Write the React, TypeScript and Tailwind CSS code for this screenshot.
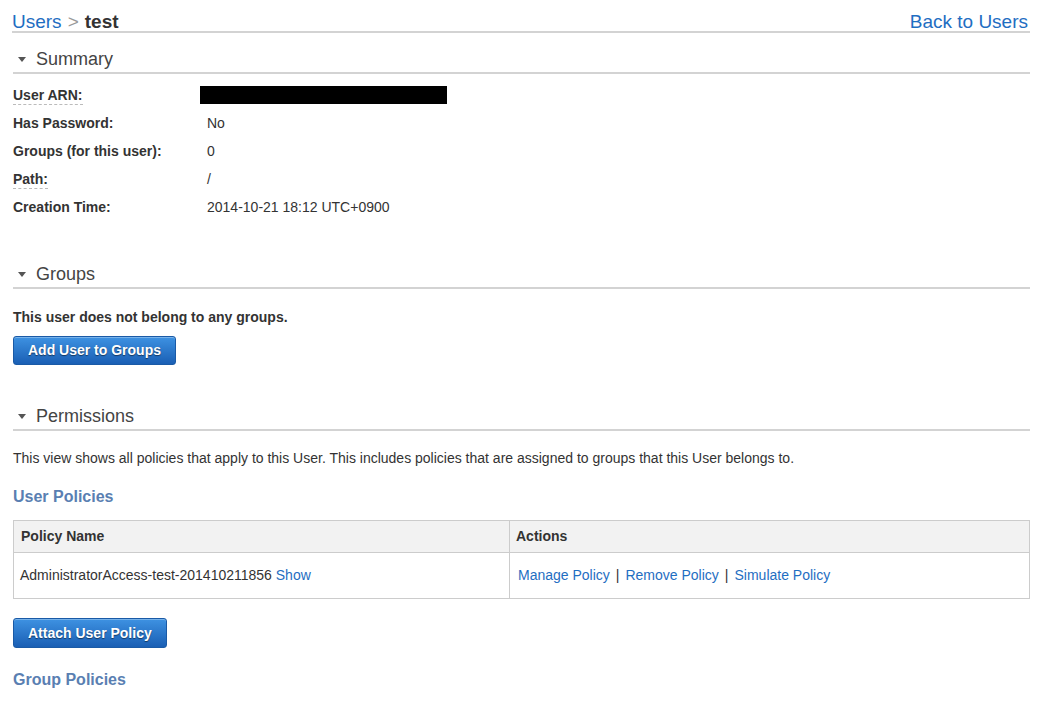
import React from "react";

const FONT = { fontFamily: '"Liberation Sans", Arial, Helvetica, sans-serif' };

const LINK = "text-[#1f6ec2] hover:underline cursor-pointer";

const BTN =
  "inline-flex items-center rounded-[3px] border border-[#1a5aa6] bg-gradient-to-b from-[#3e92e2] to-[#1a5fb4] px-[14px] text-[14px] font-bold text-white shadow-[inset_0_1px_0_rgba(255,255,255,0.3)] [text-shadow:0_1px_1px_rgba(0,0,0,0.5)]";

function SectionHeader({ title, className = "" }: { title: string; className?: string }) {
  return (
    <div
      className={`flex items-center border-b-2 border-[#d3d3d3] pb-[2px] ${className}`}
    >
      <svg width="8" height="5" viewBox="0 0 8 5" className="ml-[5px] mr-[10px]">
        <path d="M0 0h8L4 5z" fill="#555" />
      </svg>
      <span className="text-[18px] leading-[22px] text-[#444]">{title}</span>
    </div>
  );
}

const SUMMARY: { label: string; value: React.ReactNode; dashed?: boolean }[] = [
  {
    label: "User ARN:",
    value: <span className="ml-[-7px] block h-[18px] w-[247px] bg-black" />,
    dashed: true,
  },
  { label: "Has Password:", value: "No" },
  { label: "Groups (for this user):", value: "0" },
  { label: "Path:", value: "/", dashed: true },
  { label: "Creation Time:", value: "2014-10-21 18:12 UTC+0900" },
];

export default function App() {
  return (
    <div style={FONT} className="min-h-[705px] bg-white pl-[12px] pr-[8px] text-[#333]">
      {/* breadcrumb */}
      <div className="flex items-end justify-between border-b-2 border-[#d3d3d3] pt-[13px] text-[19px] leading-[18px]">
        <div>
          <span className="text-[#1f6ec2]">Users</span>
          <span className="mx-[6px] text-[#999]">&gt;</span>
          <span className="font-bold text-[#333]">test</span>
        </div>
        <span className="mr-[2px] text-[#1f6ec2]">Back to Users</span>
      </div>

      {/* Summary */}
      <SectionHeader title="Summary" className="ml-[1px] mt-[15px]" />
      <div className="ml-[1px] mt-[7px]">
        {SUMMARY.map((r) => (
          <div key={r.label} className="flex h-[28px] items-center text-[14px]">
            <div className="w-[194px] shrink-0 font-bold">
              <span
                className={
                  r.dashed ? "border-b border-dashed border-[#bbb] pb-[1px]" : ""
                }
              >
                {r.label}
              </span>
            </div>
            <div>{r.value}</div>
          </div>
        ))}
      </div>

      {/* Groups */}
      <SectionHeader title="Groups" className="ml-[1px] mt-[42px]" />
      <p className="ml-[1px] mt-[19px] text-[14px] font-bold leading-[18px]">
        This user does not belong to any groups.
      </p>
      <button className={`${BTN} ml-[1px] mt-[10px] h-[29px]`}>Add User to Groups</button>

      {/* Permissions */}
      <SectionHeader title="Permissions" className="ml-[1px] mt-[40px]" />
      <p className="ml-[1px] mt-[18px] text-[14px] leading-[18px]">
        This view shows all policies that apply to this User. This includes policies that are
        assigned to groups that this User belongs to.
      </p>
      <h3 className="ml-[1px] mt-[20px] text-[16px] font-bold leading-[20px] text-[#5a7fb2]">
        User Policies
      </h3>

      <table className="ml-[1px] mt-[13px] w-[1017px] border-collapse text-[14px]">
        <thead>
          <tr className="h-[32px] bg-[#f2f2f2]">
            <th className="w-[496px] border border-[#ccc] pl-[7px] text-left font-bold">
              Policy Name
            </th>
            <th className="border border-[#ccc] pl-[6px] text-left font-bold">Actions</th>
          </tr>
        </thead>
        <tbody>
          <tr className="h-[46px]">
            <td className="border border-[#ccc] pl-[6px]">
              AdministratorAccess-test-201410211856{" "}
              <span className={LINK}>Show</span>
            </td>
            <td className="border border-[#ccc] pl-[8px]">
              <span className={LINK}>Manage Policy</span>
              <span className="mx-[6px]">|</span>
              <span className={LINK}>Remove Policy</span>
              <span className="mx-[6px]">|</span>
              <span className={LINK}>Simulate Policy</span>
            </td>
          </tr>
        </tbody>
      </table>

      <button className={`${BTN} ml-[1px] mt-[19px] h-[30px]`}>Attach User Policy</button>

      <h3 className="ml-[1px] mt-[22px] text-[16px] font-bold leading-[20px] text-[#5a7fb2]">
        Group Policies
      </h3>
    </div>
  );
}
